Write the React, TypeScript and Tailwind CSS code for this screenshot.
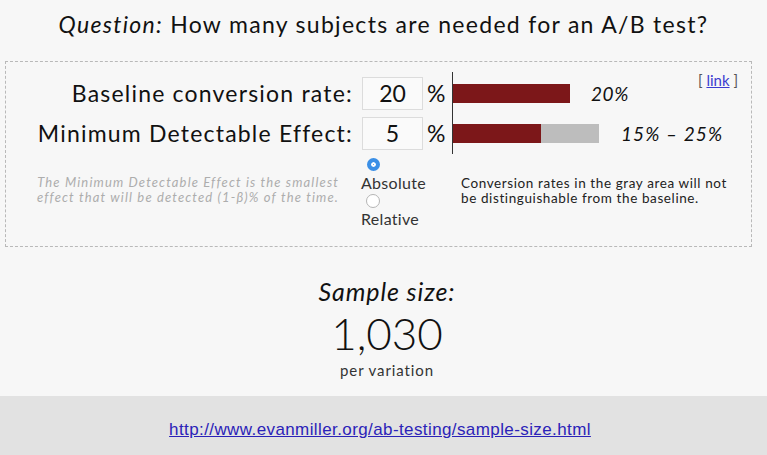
import React from 'react';

const FONT = { fontFamily: 'Lato, "Open Sans", sans-serif' };

function Radio({ checked }: { checked: boolean }) {
  return checked ? (
    <span className="block w-[13px] h-[13px] rounded-full bg-[#3b8fe6] border-[4px] border-[#3b8fe6] shadow-[inset_0_0_0_2px_#fff]" />
  ) : (
    <span className="block w-[14px] h-[14px] rounded-full border border-[#b5b5b5] bg-white" />
  );
}

function Bar({ red, gray }: { red: number; gray?: number }) {
  // 585px corresponds to 100%
  return (
    <div className="relative h-[19px] w-[150px]">
      {gray !== undefined && (
        <div className="absolute left-0 top-0 h-full bg-[#bdbdbd]" style={{ width: gray * 5.85 }} />
      )}
      <div className="absolute left-0 top-0 h-full bg-[#7c1719]" style={{ width: red * 5.85 }} />
    </div>
  );
}

export default function App() {
  return (
    <div className="w-[767px] h-[455px] bg-[#f7f7f7] flex flex-col text-[#111]" style={FONT}>
      <h1 className="pt-[9px] h-[61px] text-center text-[23px] leading-[30px] tracking-[1.3px]">
        <span className="italic">Question:</span> How many subjects are needed for an A/B test?
      </h1>

      <div className="relative ml-[5px] w-[747px] h-[186px] border border-dashed border-[#b9b9b9]">
        <a className="absolute right-[13px] top-[7px] text-[15px] text-[#555]">
          [ <span className="text-[#3b3bd0] underline">link</span> ]
        </a>

        <div className="flex items-stretch mt-[10px]">
          <div className="flex flex-col gap-[7px] pt-[5px]">
            <div className="flex items-center h-[33px]">
              <span className="w-[347px] text-right text-[23px] tracking-[1.2px]">Baseline conversion rate:</span>
              <span className="ml-[9px] w-[61px] h-[33px] bg-[#fafafa] border border-[#dcdcdc] flex items-center justify-center text-[23px]">20</span>
              <span className="ml-[4px] w-[25px] text-[23px]">%</span>
            </div>
            <div className="flex items-center h-[33px]">
              <span className="w-[347px] text-right text-[23px] tracking-[1.2px]">Minimum Detectable Effect:</span>
              <span className="ml-[9px] w-[61px] h-[33px] bg-[#fafafa] border border-[#dcdcdc] flex items-center justify-center text-[23px]">5</span>
              <span className="ml-[4px] w-[25px] text-[23px]">%</span>
            </div>
          </div>
          <div className="h-[82px] border-l border-[#333] flex flex-col gap-[21px] pt-[12px]">
            <div className="flex items-center">
              <Bar red={20} />
              <span className="ml-[-12px] italic text-[19px] leading-[19px] tracking-[0.6px]">20%</span>
            </div>
            <div className="flex items-center">
              <Bar red={15} gray={25} />
              <span className="ml-[18px] italic text-[19px] leading-[19px] tracking-[1.1px]">15% &ndash; 25%</span>
            </div>
          </div>
        </div>

        <div className="flex mt-[4px]">
          <p className="w-[333px] text-right text-[13px] leading-[15px] italic text-[#adadad] pt-[17px] tracking-[1.15px]">
            The Minimum Detectable Effect is the smallest
            <br />
            effect that will be detected (1-β)% of the time.
          </p>
          <div className="ml-[22px] w-[100px] flex flex-col text-[16px] leading-[19px] text-[#333] tracking-[0.3px]">
            <span className="ml-[6px] mb-[2px]"><Radio checked /></span>
            <span>Absolute</span>
            <span className="ml-[5px] mt-[2px] mb-[1px]"><Radio checked={false} /></span>
            <span>Relative</span>
          </div>
          <p className="text-[13.5px] leading-[15px] text-[#222] pt-[18px] tracking-[0.6px]">
            Conversion rates in the gray area will not
            <br />
            be distinguishable from the baseline.
          </p>
        </div>
      </div>

      <div className="flex flex-col items-center mt-[29px] pl-[7px]">
        <span className="italic text-[25px] leading-[30px] tracking-[0.9px]">Sample size:</span>
        <span className="mt-[5px] text-[44px] leading-[44px] font-light">1,030</span>
        <span className="mt-[7px] text-[15px] leading-[16px] text-[#333] tracking-[0.9px]">per variation</span>
      </div>

      <div className="mt-auto h-[59px] bg-[#e2e2e2] flex items-center justify-center pt-[9px] pr-[7px]">
        <a
          className="text-[17px] text-[#2b22b8] underline tracking-[0.4px]"
          style={{ fontFamily: '"Liberation Sans", Arial, sans-serif' }}
        >
          http://www.evanmiller.org/ab-testing/sample-size.html
        </a>
      </div>
    </div>
  );
}
